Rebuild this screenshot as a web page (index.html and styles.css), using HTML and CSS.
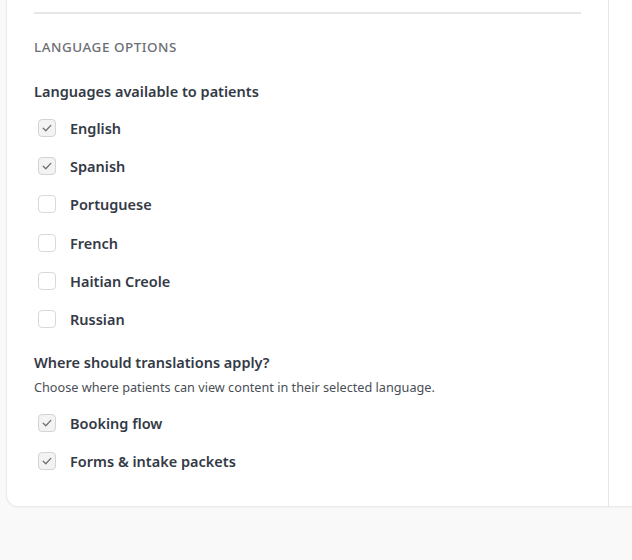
FILE: index.html
```html
<!DOCTYPE html>
<html lang="en">
<head>
<meta charset="utf-8">
<title>Language options</title>
<link rel="stylesheet" href="styles.css">
</head>
<body>
<div class="card">
  <div class="main">
    <hr class="divider">
    <section class="section">
      <h3 class="section-title">Language options</h3>

      <h4 class="group-title">Languages available to patients</h4>
      <ul class="options">
        <li class="option"><span class="box checked"><svg viewBox="0 0 12 12"><path d="M2.2 6.3 4.8 8.8 9.8 3.4"/></svg></span><span class="label">English</span></li>
        <li class="option"><span class="box checked"><svg viewBox="0 0 12 12"><path d="M2.2 6.3 4.8 8.8 9.8 3.4"/></svg></span><span class="label">Spanish</span></li>
        <li class="option"><span class="box"></span><span class="label">Portuguese</span></li>
        <li class="option"><span class="box"></span><span class="label">French</span></li>
        <li class="option"><span class="box"></span><span class="label">Haitian Creole</span></li>
        <li class="option"><span class="box"></span><span class="label">Russian</span></li>
      </ul>

      <h4 class="group-title apply">Where should translations apply?</h4>
      <p class="group-desc">Choose where patients can view content in their selected language.</p>
      <ul class="options">
        <li class="option"><span class="box checked"><svg viewBox="0 0 12 12"><path d="M2.2 6.3 4.8 8.8 9.8 3.4"/></svg></span><span class="label">Booking flow</span></li>
        <li class="option"><span class="box checked"><svg viewBox="0 0 12 12"><path d="M2.2 6.3 4.8 8.8 9.8 3.4"/></svg></span><span class="label">Forms &amp; intake packets</span></li>
      </ul>
    </section>
  </div>
  <aside class="side"></aside>
</div>
</body>
</html>
```

FILE: styles.css
```css
html, body {
  margin: 0;
  padding: 0;
}

body {
  background: #f9f9f9;
  font-family: "Noto Sans", "Open Sans", Arial, sans-serif;
  color: #343a46;
  width: 632px;
  height: 560px;
  overflow: hidden;
}

.card {
  display: grid;
  grid-template-columns: 601px 200px;
  width: 802px;
  margin-left: 6px;
  background: #ffffff;
  border: 1px solid #ebebeb;
  border-top: 0;
  border-radius: 0 0 12px 12px;
  box-shadow: 0 1px 2px rgba(0, 0, 0, 0.03);
}

.main {
  padding: 12px 27px 25px;
}

.side {
  border-left: 1px solid #e6e6e6;
}

.divider {
  margin: 0;
  border: 0;
  height: 2px;
  background: #e7e7e7;
}

.section {
  padding-top: 24px;
}

.section-title {
  margin: 0;
  font-size: 13.4px;
  line-height: 18px;
  font-weight: 500;
  letter-spacing: 0.55px;
  text-transform: uppercase;
  color: #6b6e73;
}

.group-title {
  margin: 25px 0 0;
  font-size: 14.5px;
  line-height: 20px;
  font-weight: 600;
  color: #343a46;
}

.group-title.apply {
  margin-top: 14px;
}

.group-desc {
  margin: 6px 0 0;
  font-size: 12.7px;
  line-height: 18px;
  color: #4a4f57;
}

.options {
  list-style: none;
  margin: 8px 0 0;
  padding: 0;
}

.option {
  display: flex;
  align-items: center;
  height: 38.2px;
}

.box {
  box-sizing: border-box;
  width: 18px;
  height: 18px;
  margin-left: 4px;
  margin-right: 14px;
  border: 1px solid #d9d9d9;
  border-radius: 4px;
  background: #ffffff;
  display: flex;
  align-items: center;
  justify-content: center;
}

.box.checked {
  background: #f3f3f3;
  border-color: #d4d4d4;
}

.box svg {
  width: 12px;
  height: 12px;
  fill: none;
  stroke: #707070;
  stroke-width: 1.3;
  stroke-linecap: round;
  stroke-linejoin: round;
}

.label {
  font-size: 14.5px;
  line-height: 20px;
  font-weight: 600;
  color: #343a46;
}
```
